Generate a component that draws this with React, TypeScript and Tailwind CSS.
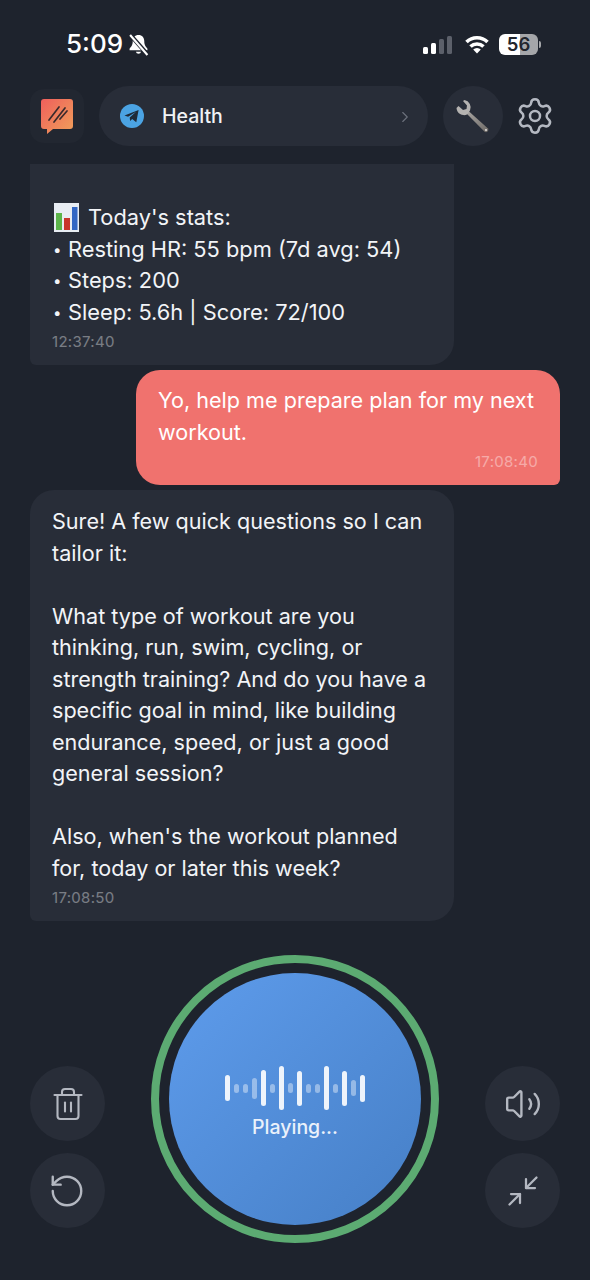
import { Trash2, Volume2, RotateCcw, Minimize2, Settings, ChevronRight } from "lucide-react";

const waveBars = [
  { h: 26, dim: false },
  { h: 9, dim: true },
  { h: 9, dim: true },
  { h: 21, dim: true },
  { h: 36, dim: false },
  { h: 9, dim: true },
  { h: 44, dim: false },
  { h: 10, dim: true },
  { h: 35, dim: false },
  { h: 9, dim: true },
  { h: 9, dim: true },
  { h: 44, dim: false },
  { h: 9, dim: true },
  { h: 35, dim: false },
  { h: 16, dim: true },
  { h: 27, dim: false },
];

const Logo = () => (
  <svg width="34" height="36" viewBox="0 0 34 36">
    <defs>
      <linearGradient id="logoGrad" x1="0" y1="0" x2="1" y2="1">
        <stop offset="0" stopColor="#ef5f5c" />
        <stop offset="1" stopColor="#f0a05a" />
      </linearGradient>
    </defs>
    <path
      d="M4 1h26a3 3 0 0 1 3 3v24a3 3 0 0 1-3 3H13l-6 5v-5H4a3 3 0 0 1-3-3V4a3 3 0 0 1 3-3z"
      fill="url(#logoGrad)"
    />
    <path
      d="M9 22L19 9M14 24L25 10M20 21L27 13"
      stroke="#3a2a2c"
      strokeWidth="1.700"
      strokeLinecap="round"
    />
  </svg>
);

const TelegramIcon = () => (
  <svg width="24" height="24" viewBox="0 0 24 24">
    <circle cx="12" cy="12" r="12" fill="#4ba3e3" />
    <path d="M4.5 11.6L18.6 6l-2.3 12.2-4.1-3.1-2.1 2-.4-3.6 6.4-5.7-8 5z" fill="#1f2a38" />
  </svg>
);

const Wrench = () => (
  <svg width="36" height="36" viewBox="0 0 36 36">
    <defs>
      <linearGradient id="wrenchGrad" x1="0" y1="0" x2="1" y2="1">
        <stop offset="0" stopColor="#a8a5a2" />
        <stop offset="1" stopColor="#6e6a66" />
      </linearGradient>
    </defs>
    <path d="M13.500 13L33 30.500a2.400 2.400 0 0 1-3.400 3.200L11.500 15.500z" fill="url(#wrenchGrad)" />
    <path
      d="M9.500 2l-1.500 1 4 4.500-.5 3.500-3.500 1L3.500 8 1.500 10a7.500 7.500 0 0 0 10.500 6.500l3-4A7.500 7.500 0 0 0 9.500 2z"
      fill="#b5b3b1"
    />
    <circle cx="31" cy="32" r="1.100" fill="#e0dedc" />
  </svg>
);

const BarChart = () => (
  <svg width="25" height="29" viewBox="0 0 25 29" className="shrink-0">
    <rect width="25" height="29" fill="#e8edf3" />
    <rect x="2" y="10" width="6" height="17" fill="#5cb54a" />
    <rect x="10" y="15" width="6" height="12" fill="#c8352b" />
    <rect x="18" y="4" width="5.500" height="23" fill="#3367c4" />
  </svg>
);

const RoundButton = ({ children }: { children: React.ReactNode }) => (
  <button
    type="button"
    className="flex h-[75px] w-[75px] items-center justify-center rounded-full bg-[#282d38] text-[#b4b8c1]"
  >
    {children}
  </button>
);

const Bullet = ({ children }: { children: React.ReactNode }) => (
  <div className="flex">
    <span className="w-[16px] shrink-0 pl-[1px] text-[15px]">•</span>
    <span>{children}</span>
  </div>
);

const Bubble = ({
  children,
  time,
  className,
}: {
  children: React.ReactNode;
  time: string;
  className: string;
}) => (
  <div className={`w-[424px] shrink-0 px-[22px] ${className}`}>
    {children}
    <div className="mt-[4px] text-[15px] leading-[20px] tracking-[0.3px] opacity-40">{time}</div>
  </div>
);

export default function App() {
  return (
    <div className="flex h-[1280px] w-[590px] flex-col overflow-hidden bg-[#1e232d] font-['Inter',sans-serif] text-[#f2f4f7]">
      {/* status bar */}
      <div className="flex h-[86px] shrink-0 items-start justify-between pl-[66px] pr-[49px] pt-[28px]">
        <div className="flex items-center gap-[5px]">
          <span className="text-[26px] font-medium leading-[32px] text-white">5:09</span>
          <svg width="21" height="23" viewBox="0 0 20 21" fill="white">
            <path d="M10 1.500c-3.500 0-5.500 2.500-5.500 6 0 4-1.500 5-3 7v1.500h17v-1.500c-1.500-2-3-3-3-7 0-3.500-2-6-5.500-6z" />
            <path d="M7.500 17.500a2.600 2.600 0 0 0 5 0z" />
            <path d="M2 1l16.500 19" stroke="#1e232d" strokeWidth="4" />
            <path d="M2 1.500l16.500 19" stroke="white" strokeWidth="2" />
          </svg>
        </div>
        <div className="flex items-center pt-[6px]">
          <div className="flex items-end gap-[3px]">
            <span className="h-[7px] w-[5px] rounded-[1.500px] bg-white" />
            <span className="h-[11px] w-[5px] rounded-[1.500px] bg-white" />
            <span className="h-[15px] w-[5px] rounded-[1.500px] bg-[#5c606a]" />
            <span className="h-[18px] w-[5px] rounded-[1.500px] bg-[#5c606a]" />
          </div>
          <svg width="24" height="19" viewBox="0 0 24 19" fill="none" stroke="white" strokeWidth="3.600" className="ml-[13px]">
            <path d="M1.500 7a15 15 0 0 1 21 0" />
            <path d="M5.500 11.500a9.500 9.500 0 0 1 13 0" />
            <path d="M12 18.500l-3.800-4a5.400 5.400 0 0 1 7.600 0z" fill="white" stroke="none" />
          </svg>
          <div className="ml-[10px] flex items-center gap-[1px]">
            <div className="flex h-[21px] w-[39px] items-center justify-center rounded-[6px] bg-[linear-gradient(90deg,#ffffff_54%,#a5a6a9_54%)]">
              <span className="text-[18.500px] font-semibold leading-[21px] text-[#22252c]">56</span>
            </div>
            <span className="h-[7px] w-[2px] rounded-r-full bg-[#a5a6a9]" />
          </div>
        </div>
      </div>

      {/* header */}
      <div className="flex h-[60px] shrink-0 items-center pl-[30px] pr-[32px]">
        <div className="flex h-[54px] w-[54px] items-center justify-center rounded-[14px] bg-[#222731]">
          <Logo />
        </div>
        <div className="ml-[15px] flex h-[60px] w-[329px] items-center rounded-full bg-[#282d38] pl-[21px] pr-[14px]">
          <TelegramIcon />
          <span className="ml-[18px] pt-[1px] text-[19.500px] font-medium text-[#f0f2f5]">Health</span>
          <ChevronRight size={18} strokeWidth={1.500} className="ml-auto mt-[2px] text-[#6c717c]" />
        </div>
        <div className="ml-[15px] flex h-[60px] w-[60px] items-center justify-center rounded-full bg-[#282d38]">
          <Wrench />
        </div>
        <Settings size={40} strokeWidth={1.500} className="ml-[12px] text-[#b4b8c1]" />
      </div>

      {/* messages */}
      <div className="mt-[18px] flex h-[757px] shrink-0 flex-col gap-[5px] overflow-hidden px-[30px] text-[21.600px] leading-[31.500px]">
        <Bubble time="12:37:40" className="h-[201px] rounded-bl-[6px] rounded-br-[24px] bg-[#282d38] pt-[38px] text-[21.800px] text-[#f2f4f7]">
          <div className="flex items-center gap-[9px] pl-[2px]">
            <BarChart />
            <span>Today's stats:</span>
          </div>
          <Bullet>Resting HR: 55 bpm (7d avg: 54)</Bullet>
          <Bullet>Steps: 200</Bullet>
          <Bullet>Sleep: 5.6h | Score: 72/100</Bullet>
        </Bubble>
        <Bubble
          time="17:08:40"
          className="ml-auto h-[115px] rounded-[24px] rounded-br-[6px] bg-[#f0726e] pt-[15px] text-white [&>div:last-child]:text-right"
        >
          <div>Yo, help me prepare plan for my next workout.</div>
        </Bubble>
        <Bubble time="17:08:50" className="h-[431px] rounded-[24px] rounded-bl-[6px] bg-[#282d38] pt-[16px] text-[#f2f4f7]">
          <div>Sure! A few quick questions so I can tailor it:</div>
          <div className="mt-[31.500px]">
            What type of workout are you thinking, run, swim, cycling, or strength training? And do you have a
            specific goal in mind, like building endurance, speed, or just a good general session?
          </div>
          <div className="mt-[31.500px]">Also, when's the workout planned for, today or later this week?</div>
        </Bubble>
      </div>

      {/* controls */}
      <div className="relative mt-[34px] flex items-end justify-between px-[30px]">
        <div className="mb-[15px] flex flex-col gap-[12px]">
          <RoundButton>
            <Trash2 size={36} strokeWidth={1.400} />
          </RoundButton>
          <RoundButton>
            <RotateCcw size={38} strokeWidth={1.500} className="-ml-[2px]" />
          </RoundButton>
        </div>
        <div className="flex h-[288px] w-[288px] items-center justify-center rounded-full border-[8px] border-[#5cab72]">
          <div className="flex h-[252px] w-[252px] flex-col items-center justify-center rounded-full bg-gradient-to-br from-[#5e9cec] to-[#467fc6] pt-[6px]">
            <div className="flex h-[46px] items-center gap-[4.500px]">
              {waveBars.map((bar, i) => (
                <span
                  key={i}
                  className={`w-[4.500px] rounded-full ${bar.dim ? "bg-white/40" : "bg-white/90"}`}
                  style={{ height: bar.h }}
                />
              ))}
            </div>
            <div className="mt-[4px] text-[19.500px] font-medium leading-[24px] text-[#eaf1fb]">Playing...</div>
          </div>
        </div>
        <div className="mb-[15px] flex flex-col gap-[12px]">
          <RoundButton>
            <Volume2 size={38} strokeWidth={1.500} />
          </RoundButton>
          <RoundButton>
            <Minimize2 size={36} strokeWidth={1.500} />
          </RoundButton>
        </div>
      </div>
    </div>
  );
}
